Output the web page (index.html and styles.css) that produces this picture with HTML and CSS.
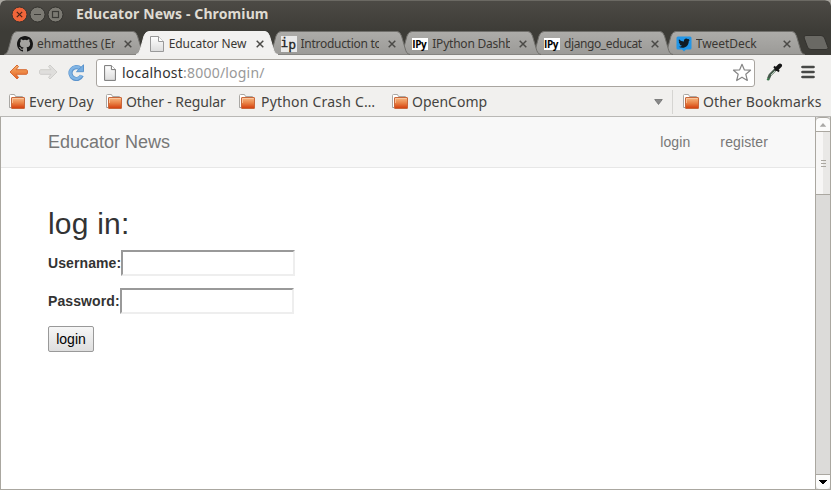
FILE: index.html
```html
<!DOCTYPE html>
<html lang="en">
<head>
<meta charset="utf-8">
<title>Educator News</title>
<link rel="stylesheet" href="styles.css">
</head>
<body>
<svg class="defs" width="0" height="0" aria-hidden="true">
  <defs>
    <linearGradient id="tabFill" x1="0" y1="0" x2="0" y2="1"><stop offset="0" stop-color="#adaca9"/><stop offset="1" stop-color="#9b9a97"/></linearGradient>
    <linearGradient id="orange" x1="0" y1="0" x2="0" y2="1"><stop offset="0" stop-color="#f8ba86"/><stop offset=".5" stop-color="#e98245"/><stop offset="1" stop-color="#d33c0c"/></linearGradient>
    <linearGradient id="arrow" x1="0" y1="0" x2="0" y2="1"><stop offset="0" stop-color="#f7b26a"/><stop offset="1" stop-color="#e35f22"/></linearGradient>
    <linearGradient id="paper" x1="0" y1="0" x2="0" y2="1"><stop offset="0" stop-color="#fff"/><stop offset="1" stop-color="#dcdcdc"/></linearGradient>
    <symbol id="tab" viewBox="0 0 142 24"><path d="M0 23.5C3 23 4 20 5 16L8 5Q9.500 .5 13 .5H129Q132 .5 133.500 5L137 17C138 21 139 23 142 23.500V24H0Z"/></symbol>
    <symbol id="close" viewBox="0 0 8 8"><path d="M.7 .7L7.300 7.300M7.300 .7L.7 7.300" fill="none" stroke="#4b4a47" stroke-width="1.500"/></symbol>
    <symbol id="folder" viewBox="0 0 16 15"><path d="M.5 13.500V1.500Q.5 .5 1.500 .5H5.500L6.500 2.500H13.500V5" fill="#fff" stroke="#aaa8a4"/><path d="M.5 13.500H2" stroke="#999"/><rect x="2.500" y="3.500" width="13" height="11" rx=".5" fill="url(#orange)" stroke="#c8673b"/><path d="M3.500 9V4.500H14.500" fill="none" stroke="#fbd0a9" opacity=".7"/></symbol>
    <symbol id="page" viewBox="0 0 14 16"><path d="M.5 .5H8.500L13.500 5.500V15.500H.5Z" fill="url(#paper)" stroke="#999"/><path d="M8.500 .5V5.500H13.500" fill="#fff" stroke="#999"/></symbol>
  </defs>
</svg>
<div class="window">
  <header class="titlebar">
    <svg class="controls" width="56" height="18" viewBox="0 0 56 18">
      <circle cx="8.500" cy="8.500" r="7.500" fill="#f0653a" stroke="#35332f"/><path d="M5.800 5.800L11.200 11.200M11.200 5.800L5.800 11.200" stroke="#4b2418" stroke-width="1.200"/>
      <circle cx="26.500" cy="8.500" r="7.500" fill="#7c7a73" stroke="#33322e"/><path d="M23 8.500H30" stroke="#3b3a36" stroke-width="1.200"/>
      <circle cx="44.500" cy="8.500" r="7.500" fill="#7c7a73" stroke="#33322e"/><rect x="41.500" y="5.500" width="6" height="6" fill="none" stroke="#3b3a36" stroke-width="1.200"/>
    </svg>
    <span class="window-title">Educator News - Chromium</span>
  </header>
  <nav class="tabs">
    <div class="tab t1"><svg class="shape"><use href="#tab"/></svg>
      <svg class="fav" viewBox="0 0 16 16"><path fill="#161616" d="M8 0C3.580 0 0 3.580 0 8c0 3.540 2.290 6.530 5.470 7.590.4.070.55-.17.55-.38v-1.490c-2.010.37-2.530-.49-2.690-.94-.09-.23-.48-.94-.82-1.130-.28-.15-.68-.52-.01-.53.63-.01 1.080.58 1.230.82.72 1.210 1.870.87 2.330.66.07-.52.280-.87.510-1.070-1.780-.2-3.640-.89-3.640-3.950 0-.87.310-1.590.820-2.150-.08-.2-.36-1.020.080-2.120 0 0 .67-.21 2.200.82a7.400 7.400 0 0 1 4 0c1.530-1.040 2.200-.82 2.200-.82.440 1.100.160 1.920.080 2.120.510.560.820 1.270.820 2.150 0 3.070-1.870 3.750-3.650 3.950.290.250.540.730.540 1.480v2.200c0 .21.150.46.550.38A8 8 0 0 0 16 8C16 3.580 12.420 0 8 0Z"/></svg>
      <span>ehmatthes (Er</span><svg class="x"><use href="#close"/></svg></div>
    <div class="tab active t2"><svg class="shape"><use href="#tab"/></svg><svg class="fav"><use href="#page"/></svg><span>Educator New</span><svg class="x"><use href="#close"/></svg></div>
    <div class="tab t3"><svg class="shape"><use href="#tab"/></svg><b class="fav ip">i<sub>p</sub></b><span>Introduction to</span><svg class="x"><use href="#close"/></svg></div>
    <div class="tab t4"><svg class="shape"><use href="#tab"/></svg><b class="fav ipy">IPy</b><span>IPython Dashb</span><svg class="x"><use href="#close"/></svg></div>
    <div class="tab t5"><svg class="shape"><use href="#tab"/></svg><b class="fav ipy">IPy</b><span>django_educat</span><svg class="x"><use href="#close"/></svg></div>
    <div class="tab t6"><svg class="shape"><use href="#tab"/></svg>
      <svg class="fav" viewBox="0 0 16 16"><path d="M2 .5H14Q15.500 .5 15.500 2V12Q15.500 13.500 14 13.500H10L8 15.500 6 13.500H2Q.5 13.500.5 12V2Q.5.5 2 .5Z" fill="#2196e8"/><path d="M3 3.200C4.500 4.800 6 5.400 8 5.500 7.600 3.500 9 2.500 10.200 2.500 11 2.500 11.500 2.800 12 3.200L13.500 2.700 12.800 4 13.800 3.900 12.800 5C12.800 9 10 11.800 6.500 11.800 5 11.800 3.700 11.400 2.700 10.700 4 10.800 5 10.500 6 9.800 4.800 9.700 4 9 3.800 8.100H4.700C3.500 7.700 2.900 6.900 2.800 5.800L3.700 6C2.700 5.200 2.500 4.300 3 3.200Z" fill="#101c25"/></svg>
      <span>TweetDeck</span><svg class="x"><use href="#close"/></svg></div>
    <svg class="newtab" width="27" height="16" viewBox="0 0 27 16"><path d="M3 .5H18Q20.500 .5 21.500 3L25 12.500Q25.500 14.500 23 14.500H8Q5.500 14.500 4.500 12L1.200 3Q.5 .5 3 .5Z" fill="#6a6964" stroke="#34332f"/></svg>
  </nav>
  <div class="toolbar">
    <svg class="back" width="20" height="16" viewBox="0 0 20 16"><path d="M8 1L1 8 8 15 9.500 13.500 7 10.300H17.500Q18.500 10.300 18.500 8T17.500 5.700H7L9.500 2.500Z" fill="url(#arrow)" stroke="#d66a33" stroke-linejoin="round"/></svg>
    <svg class="forward" width="20" height="16" viewBox="0 0 20 16"><path d="M12 1L19 8 12 15 10.500 13.500 13 10.300H2.500Q1.500 10.300 1.500 8T2.500 5.700H13L10.500 2.500Z" fill="#dfdedc" stroke="#cfcecb" stroke-linejoin="round"/></svg>
    <svg class="reload" width="17" height="17" viewBox="0 0 17 17"><path d="M12.500 4.800A5.900 5.900 0 1 0 13.800 11.500" fill="none" stroke="#5b94cd" stroke-width="4.200"/><path d="M12.500 4.800A5.900 5.900 0 1 0 13.500 11.300" fill="none" stroke="#80b4e4" stroke-width="2.600"/><path d="M15.500 .8V7.700H8.500Z" fill="#76ade0" stroke="#5b94cd" stroke-linejoin="round"/></svg>
    <div class="address">
      <svg width="12" height="16" viewBox="0 0 12 16"><path d="M.6 .6H7.400L11.400 4.600V15.400H.6Z" fill="url(#paper)" stroke="#777"/><path d="M7.400 .6V4.600H11.400" fill="#fff" stroke="#777"/></svg>
      <span class="url">localhost<i>:8000/login/</i></span>
      <svg width="20" height="19" viewBox="0 0 20 19"><path d="M10 1.300L12.300 6.800 18.500 7.200 13.800 11.200 15.300 17.500 10 14.200 4.700 17.500 6.200 11.200 1.500 7.200 7.700 6.800Z" fill="#fff" stroke="#858585" stroke-width="1.200" stroke-linejoin="round"/></svg>
    </div>
    <svg class="picker" width="17" height="18" viewBox="0 0 17 18"><path d="M9.500 6.500L4 12 2.500 15.500" fill="none" stroke="#46594b" stroke-width="3"/><path d="M10 7L5 12" stroke="#b5cbb8" stroke-width="1"/><path d="M8 3.500L13 8.500" stroke="#151515" stroke-width="2"/><path d="M10.500 6L14 2.500" stroke="#151515" stroke-width="4" stroke-linecap="round"/><circle cx="2.200" cy="16.300" r="1.300" fill="#397549"/></svg>
    <svg class="menu" width="14" height="14" viewBox="0 0 14 14"><path d="M1.500 2H12.500M1.500 7H12.500M1.500 12H12.500" stroke="#474846" stroke-width="2.700" stroke-linecap="round"/></svg>
  </div>
  <div class="bookmarks">
    <span class="bm b1"><svg><use href="#folder"/></svg><span>Every Day</span></span>
    <span class="bm b2"><svg><use href="#folder"/></svg><span>Other - Regular</span></span>
    <span class="bm b3"><svg><use href="#folder"/></svg><span>Python Crash C…</span></span>
    <span class="bm b4"><svg><use href="#folder"/></svg><span>OpenComp</span></span>
    <svg class="overflow" width="9" height="6" viewBox="0 0 9 6"><path d="M.7 .5H8.300L4.500 5.500Z" fill="#888" stroke="#666" stroke-width=".7"/></svg>
    <span class="bm other"><svg><use href="#folder"/></svg><span>Other Bookmarks</span></span>
  </div>
  <div class="viewport">
    <main class="page">
      <nav class="navbar"><a class="brand">Educator News</a><a class="link">login</a><a class="link">register</a></nav>
      <form class="login">
        <h2>log in:</h2>
        <div class="field"><label for="u">Username:</label><input id="u" type="text"></div>
        <div class="field"><label for="p">Password:</label><input id="p" type="password"></div>
        <button type="button">login</button>
      </form>
    </main>
    <div class="scrollbar">
      <svg class="sb up" viewBox="0 0 14 14"><path d="M3.500 9.500L7 5.500 10.500 9.500Z" fill="#aaa9a6"/></svg>
      <div class="thumb"><i></i><i></i><i></i></div>
      <div class="track"></div>
      <svg class="sb down" viewBox="0 0 14 14"><path d="M3 5H11V6H10V7H9V8H8V9H6V8H5V7H4V6H3Z" fill="#000"/></svg>
    </div>
  </div>
</div>
</body>
</html>
```
FILE: styles.css
```css
* { box-sizing: border-box; }
body { margin: 0; background: #aaa7a0; font-family: "Noto Sans", "Open Sans", sans-serif; overflow: hidden; }
svg { display: block; flex: none; }
.defs { position: absolute; }
.window { width: 831px; height: 490px; display: flex; flex-direction: column; background: #f1f0ee; border-radius: 6px 6px 0 0; overflow: hidden; }

.titlebar { height: 31px; flex: none; display: flex; align-items: flex-start; padding: 5px 0 0 11px; border-top: 1px solid #6b6963; background: linear-gradient(#4c4a45, #3d3c37); }
.controls { margin-right: 9px; }
.window-title { color: #dfdbd2; font-weight: 700; font-size: 14px; line-height: 16px; letter-spacing: .12px; white-space: nowrap; }

.tabs { height: 24px; flex: none; display: flex; padding-left: 4px; background: #3d3c37; isolation: isolate; }
.tab { position: relative; width: 142px; height: 24px; margin-right: -10.25px; flex: none; display: flex; align-items: center; padding: 2px 0 0 13px; color: #3a3733; }
.t1 { z-index: 6; } .t2 { z-index: 9; } .t3 { z-index: 5; } .t4 { z-index: 4; } .t5 { z-index: 3; } .t6 { z-index: 2; }
.shape { position: absolute; z-index: -1; left: 0; top: 0; width: 142px; height: 24px; fill: url(#tabFill); stroke: #706f6b; }
.active .shape { fill: #f2f1f0; stroke: #f2f1f0; }
.fav { width: 16px; height: 16px; margin-right: 4px; flex: none; }
.tab > span { width: 78px; overflow: hidden; white-space: nowrap; font-size: 12px; line-height: 18px; margin-right: 9px; }
.t2 > span { letter-spacing: -.1px; }
.t3 > span { letter-spacing: -.28px; }
.t4 > span { letter-spacing: -.22px; }
.t5 > span { letter-spacing: -.4px; }
.t6 > span { letter-spacing: -.05px; }
.x { width: 8px; height: 8px; }
.ip { background: #e9e9e9; color: #222; font: 400 13px/13px "DejaVu Sans Mono", monospace; letter-spacing: 0; white-space: nowrap; -webkit-text-stroke: .3px #222; }
.ip sub { font-size: 13px; line-height: 0; vertical-align: -1.500px; }
.ipy { background: #fff; color: #000; height: 12px; font: 700 10px/12px "Open Sans", sans-serif; letter-spacing: -.4px; }
.newtab { margin: 4px 0 0 8px; }

.toolbar { height: 34px; flex: none; display: flex; align-items: center; padding: 0 0 0 9px; }
.forward { margin-left: 9px; }
.reload { margin-left: 10px; }
.address { width: 659px; height: 28px; margin: 1px 0 0 11px; display: flex; align-items: center; background: #fff; border: 1px solid #a9a5a0; border-radius: 3px; padding: 0 2px 0 7px; }
.url { flex: 1; margin-left: 6px; font-size: 14px; line-height: 20px; letter-spacing: .21px; color: #333; white-space: nowrap; }
.url i { font-style: normal; color: #999; }
.picker { margin-left: 11px; }
.menu { margin-left: 18px; }

.bookmarks { height: 28px; flex: none; display: flex; align-items: center; padding: 0 0 2px 9px; border-bottom: 1px solid #b9b8b5; color: #454441; }
.bm { display: flex; align-items: center; white-space: nowrap; font-size: 14px; line-height: 20px; flex: none; }
.bm svg { width: 16px; height: 15px; margin: 0 4px 0 0; }
.b1 { width: 97px; } .b2 { width: 133px; letter-spacing: -.1px; } .b3 { width: 153px; letter-spacing: .2px; } .b4 { width: 110px; }
.b3 svg { margin-right: 6px; }
.overflow { margin-left: 152px; }
.other { margin-left: 9px; padding-left: 10px; height: 24px; border-left: 1px solid #d6d5d2; letter-spacing: .14px; }

.viewport { flex: 1; min-height: 0; display: flex; border: solid #aaa7a0; border-width: 0 1px 1px; background: #fff; }
.page { flex: 1; font-family: "Liberation Sans", Arial, sans-serif; font-size: 14px; color: #333; }
.navbar { height: 51px; display: flex; align-items: center; gap: 30px; padding: 0 47px; background: #f8f8f8; border-bottom: 1px solid #e7e7e7; color: #777; }
.brand { font-size: 18px; flex: 1; }
.link { letter-spacing: .12px; }
.login { padding: 39px 47px; }
h2 { margin: 0 0 10px; font-size: 30px; line-height: 33px; font-weight: 400; letter-spacing: .2px; }
.field { display: flex; align-items: center; height: 26px; margin-bottom: 12px; }
label { font-weight: 700; letter-spacing: .1px; }
input { width: 174px; height: 26px; padding: 1px; border: 2px solid; border-color: #999 #eee #eee #999; background: #fff; outline: 0; }
button { display: block; width: 46px; height: 26px; padding: 0; border: 1px solid #999; border-radius: 2px; background: linear-gradient(#f6f6f6, #dedede); color: #000; font: 14px "Liberation Sans", Arial, sans-serif; }

.scrollbar { width: 15px; display: flex; flex-direction: column; border-left: 1px solid #aaa7a0; background: #dcdbd9; }
.sb { width: 14px; height: 15px; background: #fcfcfb; }
.up { border-radius: 4px 4px 0 0; border-top: 1px solid #aaa7a0; border-bottom: 1px solid #aaa7a0; }
.thumb { height: 63px; display: flex; flex-direction: column; align-items: center; justify-content: center; gap: 2px; background: linear-gradient(90deg, #f7f6f5 50%, #e9e8e6 50%); border-bottom: 1px solid #aaa7a0; }
.thumb i { width: 5px; height: 1px; background: #aaa7a0; }
.track { flex: 1; }
.down { border-top: 1px solid #aaa7a0; border-radius: 0 0 4px 4px; }
```
